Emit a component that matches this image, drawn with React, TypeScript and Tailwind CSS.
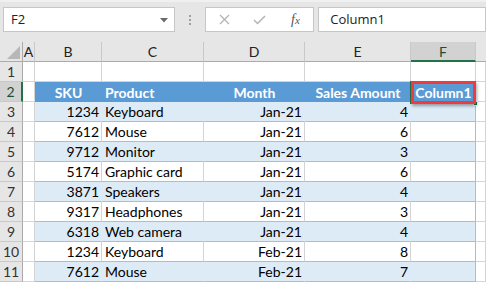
import React from "react";

const cols = ["A", "B", "C", "D", "E", "F"];

const rows: [string, string, string, string][] = [
  ["1234", "Keyboard", "Jan-21", "4"],
  ["7612", "Mouse", "Jan-21", "6"],
  ["9712", "Monitor", "Jan-21", "3"],
  ["5174", "Graphic card", "Jan-21", "6"],
  ["3871", "Speakers", "Jan-21", "4"],
  ["9317", "Headphones", "Jan-21", "3"],
  ["6318", "Web camera", "Jan-21", "4"],
  ["1234", "Keyboard", "Feb-21", "8"],
  ["7612", "Mouse", "Feb-21", "7"],
];

function RowHead({ n, active }: { n: number; active?: boolean }) {
  return (
    <div
      className={
        "flex h-[20px] items-center justify-center border-b border-b-[#c9c9c9] text-[14px] " +
        (active
          ? "border-r-2 border-r-[#217346] bg-[#d2d2d2] text-[#1e4d33]"
          : "border-r border-r-[#ababab] bg-[#e6e6e6] text-[#333]")
      }
    >
      {n}
    </div>
  );
}

function Blank({ right = "border-r-[#d4d4d4]" }: { right?: string }) {
  return <div className={"h-[20px] border-r border-b border-b-[#d4d4d4] bg-white " + right} />;
}

function Cell({
  children,
  band,
  last,
  align = "right",
}: {
  children?: React.ReactNode;
  band: boolean;
  last?: boolean;
  align?: "left" | "right";
}) {
  const right = last ? "border-r-[#9bc2e6]" : band ? "border-r-[#ddebf7]" : "border-r-[#d4d4d4]";
  return (
    <div
      className={
        "flex h-[20px] items-center overflow-hidden whitespace-nowrap border-r border-b border-b-[#9bc2e6] text-[14px] text-black " +
        right +
        (band ? " bg-[#ddebf7]" : " bg-white") +
        (align === "right" ? " justify-end pr-[2px]" : " pl-[3px]")
      }
    >
      {children}
    </div>
  );
}

export default function App() {
  return (
    <div className="relative h-[284px] w-[486px] overflow-hidden bg-white font-['Lato',sans-serif]">
      {/* formula bar */}
      <div className="flex h-[42px] items-start border-t-2 border-t-[#f0f0f0] bg-[#e6e6e6] pt-[5px]">
        <div className="relative ml-[3px] flex h-[25px] w-[174px] items-center border border-[#c6c6c6] bg-white pl-[7px] font-['Open_Sans',sans-serif] text-[13px] text-[#222]">
          F2
          <svg className="absolute right-[6px] top-[10px]" width="8" height="5" viewBox="0 0 8 5">
            <polygon points="0,0 8,0 4,4.5" fill="#6b6b6b" />
          </svg>
        </div>
        <div className="flex h-[25px] w-[31px] flex-col items-center justify-center gap-[2px]">
          <span className="h-[2px] w-[2px] bg-[#a0a0a0]" />
          <span className="h-[2px] w-[2px] bg-[#a0a0a0]" />
          <span className="h-[2px] w-[2px] bg-[#a0a0a0]" />
        </div>
        <div className="flex h-[25px] w-[109px] items-center border border-[#c6c6c6] bg-white">
          <div className="flex w-[36px] justify-center">
            <svg width="11" height="11" viewBox="0 0 11 11">
              <path d="M1 1L10 10M10 1L1 10" stroke="#b3b3b3" strokeWidth="1.3" />
            </svg>
          </div>
          <div className="flex w-[36px] justify-center">
            <svg width="13" height="10" viewBox="0 0 13 10">
              <path d="M1 5L4.5 8.5L12 1" stroke="#b3b3b3" strokeWidth="1.5" fill="none" />
            </svg>
          </div>
          <div className="flex w-[36px] justify-center font-['Liberation_Serif',serif] text-[14px] italic text-[#555]">
            <span>f</span>
            <span className="mt-[3px] text-[11px]">x</span>
          </div>
        </div>
        <div className="ml-[4px] flex h-[25px] w-[170px] items-center border border-[#c6c6c6] bg-white pl-[11px] font-['Open_Sans',sans-serif] text-[13px] text-[#222]">
          Column1
        </div>
      </div>

      {/* grid */}
      <div className="grid grid-cols-[23px_12px_67px_102px_101px_106px_65px_10px]">
        {/* column headers */}
        <div className="relative h-[20px] border-r border-b border-r-[#ababab] border-b-[#ababab] bg-[#e6e6e6]">
          <svg className="absolute left-0 top-0" width="22" height="19" viewBox="0 0 22 19">
            <polygon points="20,4 20,17 7,17" fill="#b7b7b7" />
          </svg>
        </div>
        {cols.map((c) => (
          <div
            key={c}
            className={
              "flex h-[20px] items-center justify-center border-r border-r-[#c9c9c9] text-[14px] " +
              (c === "F"
                ? "border-b-2 border-b-[#217346] bg-[#d2d2d2] text-[#1e4d33]"
                : "border-b border-b-[#ababab] bg-[#e6e6e6] text-[#222]")
            }
          >
            {c}
          </div>
        ))}
        <div className="h-[20px] border-b border-b-[#ababab] bg-[#e6e6e6]" />

        {/* row 1 */}
        <RowHead n={1} />
        <Blank />
        <Blank />
        <Blank />
        <Blank />
        <Blank />
        <Blank />
        <Blank />

        {/* row 2: table header */}
        <RowHead n={2} active />
        <Blank />
        <div className="flex h-[20px] items-center justify-center bg-[#5b9bd5] text-[14px] font-bold text-white">SKU</div>
        <div className="flex h-[20px] items-center bg-[#5b9bd5] pl-[3px] text-[14px] font-bold text-white">Product</div>
        <div className="flex h-[20px] items-center justify-center bg-[#5b9bd5] text-[14px] font-bold text-white">Month</div>
        <div className="flex h-[20px] items-center justify-center whitespace-nowrap bg-[#5b9bd5] text-[14px] font-bold text-white">Sales Amount</div>
        <div className="flex h-[20px] items-center justify-center bg-[#5b9bd5] text-[14px] font-bold text-white">Column1</div>
        <Blank />

        {rows.map((r, i) => {
          const band = i % 2 === 0;
          return (
            <React.Fragment key={i}>
              <RowHead n={i + 3} />
              <Blank />
              <Cell band={band}>{r[0]}</Cell>
              <Cell band={band} align="left">
                {r[1]}
              </Cell>
              <Cell band={band}>{r[2]}</Cell>
              <Cell band={band}>{r[3]}</Cell>
              <Cell band={band} last />
              <Blank />
            </React.Fragment>
          );
        })}
      </div>

      {/* active cell F2 selection + highlight */}
      <div className="absolute left-[410px] top-[81px] h-[23px] w-[66px] border-2 border-[#217346]" />
      <div className="absolute left-[473px] top-[101px] h-[5px] w-[5px] border border-white bg-[#217346]" />
      <div className="absolute left-[411px] top-[81px] h-[23px] w-[65px] border-[3px] border-[#ee3b3f] shadow-[1px_2px_3px_rgba(0,0,0,0.35)]" />
    </div>
  );
}
